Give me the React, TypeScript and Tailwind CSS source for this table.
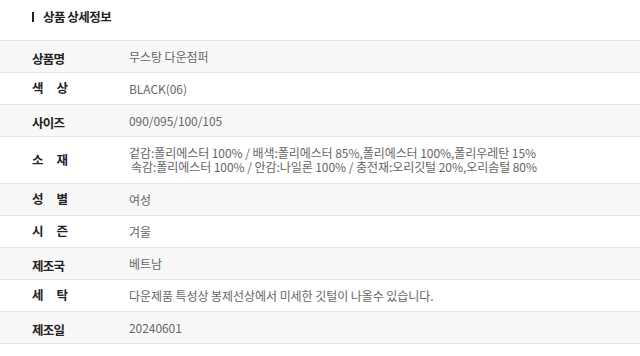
import React from "react";

type Row = { label: string[]; value: React.ReactNode; gray: boolean; tall?: boolean };

const rows: Row[] = [
  { label: ["상품명"], value: "무스탕 다운점퍼", gray: true },
  { label: ["색", "상"], value: "BLACK(06)", gray: false },
  { label: ["사이즈"], value: "090/095/100/105", gray: true },
  {
    label: ["소", "재"],
    value: (
      <div className="flex flex-col leading-[14.5px]">
        <span>겉감:폴리에스터 100% / 배색:폴리에스터 85%,폴리에스터 100%,폴리우레탄 15%</span>
        <span className="pl-[2px]">속감:폴리에스터 100% / 안감:나일론 100% / 충전재:오리깃털 20%,오리솜털 80%</span>
      </div>
    ),
    gray: false,
    tall: true,
  },
  { label: ["성", "별"], value: "여성", gray: true },
  { label: ["시", "즌"], value: "겨울", gray: false },
  { label: ["제조국"], value: "베트남", gray: true },
  { label: ["세", "탁"], value: "다운제품 특성상 봉제선상에서 미세한 깃털이 나올수 있습니다.", gray: false },
  { label: ["제조일"], value: "20240601", gray: true },
];

export default function App() {
  return (
    <div
      className="w-[640px] h-[356px] bg-white overflow-hidden"
      style={{ fontFamily: '"Noto Sans CJK KR", "Noto Sans", sans-serif' }}
    >
      <div className="h-[34px] mb-[6px] flex items-center pl-[32px] gap-[9px]">
        <div className="w-[2px] h-[10px] bg-[#222]" />
        <span className="text-[12.5px] font-bold text-[#222] tracking-[-0.04em]">상품 상세정보</span>
      </div>
      <div className="border-t border-[#e3e3e3]">
        {rows.map((r, i) => (
          <div
            key={i}
            className={`flex items-center border-b border-[#e3e3e3] ${r.tall ? "h-[47px]" : "h-[32px]"} ${r.gray ? "bg-[#f8f8f8]" : "bg-white"}`}
          >
            <div className="w-[129px] pl-[32px] shrink-0">
              {r.label.length === 1 ? (
                <span className="text-[12.5px] font-bold text-[#222] tracking-[-0.06em]">{r.label[0]}</span>
              ) : (
                <span className="w-[36px] flex justify-between text-[12.5px] font-bold text-[#222]">
                  <span>{r.label[0]}</span>
                  <span>{r.label[1]}</span>
                </span>
              )}
            </div>
            <div className="text-[12px] text-[#666] tracking-[-0.005em]">{r.value}</div>
          </div>
        ))}
      </div>
    </div>
  );
}
